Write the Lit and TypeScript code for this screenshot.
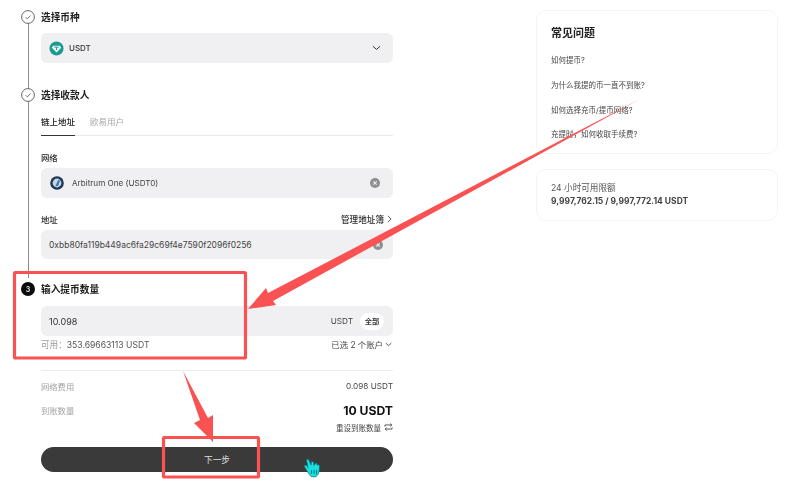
import { LitElement, html, css, svg } from "lit";
import { customElement } from "lit/decorators.js";

const check = html`<svg class="chk" viewBox="0 0 14 14" width="14" height="14"><circle cx="7" cy="7" r="6.4" fill="#fff" stroke="#555" stroke-width="0.9"/><path d="M4.6 7.2l1.7 1.7 3.2-3.4" fill="none" stroke="#666" stroke-width="0.9"/></svg>`;
const clear = (cls = "") => html`<svg class=${cls} viewBox="0 0 10 10" width="10" height="10"><circle cx="5" cy="5" r="5" fill="#8f8f8f"/><path d="M3.3 3.3l3.4 3.4M6.7 3.3l-3.4 3.4" stroke="#eee" stroke-width="1.1"/></svg>`;

@customElement("app-root")
export class AppRoot extends LitElement {
  static styles = css`
    :host { display: block; width: 803px; height: 501px; position: relative; overflow: hidden; background: #fff;
      font-family: Inter, "Noto Sans CJK SC", sans-serif; color: #1c1c1c; }
    .page { display: flex; align-items: flex-start; height: 501px; box-sizing: border-box; filter: blur(0.5px); padding-left: 41px; }
    .left { width: 352px; flex: none; display: flex; flex-direction: column; padding-top: 10px; position: relative; }
    .line { position: absolute; left: -13px; top: 18px; width: 1px; height: 260px; background: #8b8b8b; }
    .step { display: flex; align-items: center; height: 14px; font-size: 9.7px; font-weight: 600; position: relative; }
    .step .mark { position: absolute; left: -20px; top: 0; width: 14px; height: 14px; display: flex; }
    .num { width: 14px; height: 14px; border-radius: 50%; background: #0a0a0a; color: #ddd; font-size: 7px; font-weight: 700; display: flex; align-items: center; justify-content: center; }
    .box { background: #f0eff1; border-radius: 6px; display: flex; align-items: center; box-sizing: border-box; height: 30px; padding: 0 8px; font-size: 9px; color: #333; }
    .grow { flex: 1; }
    .sel { margin-top: 9px; }
    .sel .txt { margin-left: 5px; font-weight: 500; font-size: 8px; }
    .s2 { margin-top: 25px; }
    .tabs { display: flex; margin-top: 9px; height: 24px; border-bottom: 1px solid #eaeaea; font-size: 8.5px; gap: 15px; }
    .tab { height: 25px; display: flex; align-items: center; padding-bottom: 5px; box-sizing: border-box; color: #a8a8a8; }
    .tab.on { color: #222; font-weight: 500; border-bottom: 1.5px solid #333; }
    .lab { font-size: 8.4px; font-weight: 500; color: #2b2b2b; display: flex; justify-content: space-between; align-items: center; height: 14px; }
    .lab .r { font-size: 8.6px; display: flex; align-items: center; gap: 3px; margin-right: 1px; }
    .l1 { margin-top: 14px; }
    .l2 { margin-top: 14px; }
    .mt4 { margin-top: 4px; }
    .arb { margin-left: 1px; }
    .net { margin-left: 8px; font-size: 8.1px; color: #444; }
    .c1 { margin-right: 5px; }
    .c2 { margin-right: 2px; }
    .tall { height: 29px; }
    .addr { font-size: 8.5px; color: #444; }
    .s3 { margin-top: 23px; }
    .amt { margin-top: 10px; padding-right: 9px; }
    .amt .u { margin-right: 7px; font-size: 8.2px; color: #444; }
    .all { background: #fff; border-radius: 10px; height: 17px; width: 24px; font-size: 7.2px; font-weight: 600; display: flex; align-items: center; justify-content: center; }
    .avail { display: flex; justify-content: space-between; align-items: center; height: 14px; margin-top: 1px; font-size: 8.6px; color: #555; }
    .avail i { font-style: normal; color: #9b9b9b; }
    .avail .r { display: flex; align-items: center; gap: 2px; margin-right: 1px; color: #444; font-size: 8.4px; }
    hr { border: 0; border-top: 1px solid #ececec; margin: 19px 0 0; width: 100%; }
    .kv { display: flex; justify-content: space-between; align-items: center; font-size: 8.3px; color: #a3a3a3; height: 14px; }
    .kv b { font-weight: 400; color: #444; font-size: 8.2px; }
    .kv b.big { font-size: 12.2px; font-weight: 700; color: #111; }
    .k1 { margin-top: 8px; }
    .k2 { margin-top: 10px; }
    .reset { display: flex; justify-content: flex-end; align-items: center; gap: 3px; height: 14px; margin-top: 3px; font-size: 7.5px; color: #444; }
    .btn { margin-top: 13px; height: 25px; border-radius: 13px; background: #3b3a3b; color: #ddd; font-size: 8.7px; display: flex; align-items: center; justify-content: center; }
    .side { margin-left: 143px; width: 242px; flex: none; display: flex; flex-direction: column; gap: 15px; padding-top: 10px; }
    .card { border: 1px solid #f3f3f3; border-radius: 10px; box-sizing: border-box; padding: 0 14px; }
    .faq { height: 144px; padding-top: 15px; }
    .faq h3 { margin: 0; font-size: 11px; line-height: 14px; font-weight: 600; color: #222; }
    .faq p { margin: 0; font-size: 7.5px; color: #444; height: 24.7px; display: flex; align-items: center; }
    .faq .q { margin-top: 7.5px; }
    .lim { height: 52px; display: flex; flex-direction: column; justify-content: center; font-size: 8.6px; color: #555; line-height: 13px; }
    .lim b { font-weight: 700; font-size: 8.5px; color: #444; }
    .ov { position: absolute; left: 0; top: 0; pointer-events: none; }
  `;

  render() {
    return html`
      <div class="page">
        <div class="left">
          <div class="line"></div>
          <div class="step"><span class="mark">${check}</span>选择币种</div>
          <div class="box sel">
            <svg viewBox="0 0 16 16" width="15" height="15"><circle cx="8" cy="8" r="7.5" fill="#1a9a90"/><path d="M4.3 5h7.4l1.3 2.2L8 12.2 3 7.2z" fill="#e6f7f4"/><path d="M5.8 6.6h4.4M8 6.6v3" stroke="#1a9a90" stroke-width="1"/></svg>
            <span class="txt">USDT</span><span class="grow"></span>
            <svg viewBox="0 0 10 6" width="9" height="6" style="margin-right:4px"><path d="M1 1l4 3.6L9 1" fill="none" stroke="#333" stroke-width="1.1"/></svg>
          </div>
          <div class="step s2"><span class="mark">${check}</span>选择收款人</div>
          <div class="tabs"><div class="tab on">链上地址</div><div class="tab">欧易用户</div></div>
          <div class="lab l1">网络</div>
          <div class="box mt4">
            <svg class="arb" viewBox="0 0 14 14" width="14" height="14"><circle cx="7" cy="7" r="6.8" fill="#1d3557"/><circle cx="7" cy="7" r="4.4" fill="#c9d5e0"/><path d="M5.4 10l3-6.2 1.6.9-2 5.4z" fill="#2a78c0"/></svg>
            <span class="net">Arbitrum One (USDT0)</span><span class="grow"></span>${clear("c1")}
          </div>
          <div class="lab l2"><span>地址</span><span class="r">管理地址簿 <svg viewBox="0 0 6 10" width="5" height="8"><path d="M1 1l4 4-4 4" fill="none" stroke="#333" stroke-width="1"/></svg></span></div>
          <div class="box mt4 tall">
            <span class="addr">0xbb80fa119b449ac6fa29c69f4e7590f2096f0256</span><span class="grow"></span>${clear("c2")}
          </div>
          <div class="step s3"><span class="mark"><span class="num">3</span></span>输入提币数量</div>
          <div class="box amt"><span>10.098</span><span class="grow"></span><span class="u">USDT</span><span class="all">全部</span></div>
          <div class="avail"><span><i>可用：</i>353.69663113 USDT</span><span class="r">已选 2 个账户 <svg viewBox="0 0 10 6" width="7" height="5"><path d="M1 1l4 3.6L9 1" fill="none" stroke="#333" stroke-width="1.1"/></svg></span></div>
          <hr />
          <div class="kv k1"><span>网络费用</span><b>0.098 USDT</b></div>
          <div class="kv k2"><span>到账数量</span><b class="big">10 USDT</b></div>
          <div class="reset">重设到账数量 <svg viewBox="0 0 10 9" width="9" height="8"><path d="M1 4V2.2h7.6M7 .6l1.7 1.6L7 3.8M9 5v1.8H1.4M3 8.4L1.3 6.8 3 5.2" fill="none" stroke="#333" stroke-width=".9"/></svg></div>
          <div class="btn">下一步</div>
        </div>
        <div class="side">
          <div class="card faq">
            <h3>常见问题</h3>
            <div class="q">
              <p>如何提币?</p><p>为什么我提的币一直不到账?</p><p>如何选择充币/提币网络?</p><p>充提时，如何收取手续费?</p>
            </div>
          </div>
          <div class="card lim"><span>24 小时可用限额</span><b>9,997,762.15 / 9,997,772.14 USDT</b></div>
        </div>
      </div>
      <svg class="ov" width="803" height="501" viewBox="0 0 803 501">
        ${svg`
        <rect x="14.5" y="272.5" width="231" height="85.5" rx="1" fill="none" stroke="#fa5252" stroke-width="3.2"/>
        <rect x="163.5" y="437.5" width="95" height="39.5" rx="1" fill="none" stroke="#fa5252" stroke-width="3.2"/>
        <path d="M640 99 L268 293 L266 288 L248 309 L276 305 L273 301 Z" fill="#fa5252"/>
        <path d="M183 371 L208 418 L213 415 L213 442 L194 423 L200 420 Z" fill="#fa5252"/>
        <g transform="translate(303 458)">
          <path d="M6 16 L1 8 Q2 6.5 4 8 L5 9.5 L3.5 2 Q4.5 .5 6 2 L8 7 L8.5 3.5 Q10 3 10.5 4.5 L11 7.5 L13 4.8 Q14.5 5 14 7 L15.5 6.8 Q17 7 16.5 9 L16 14 Q15 18 12 19 L8 18.5 Z" fill="#17e0e0" stroke="#0b6f78" stroke-width=".7"/>
          <path d="M8.5 12v4M11 12v4M13.5 12v4" stroke="#0b6f78" stroke-width=".9"/>
        </g>`}
      </svg>
    `;
  }
}
